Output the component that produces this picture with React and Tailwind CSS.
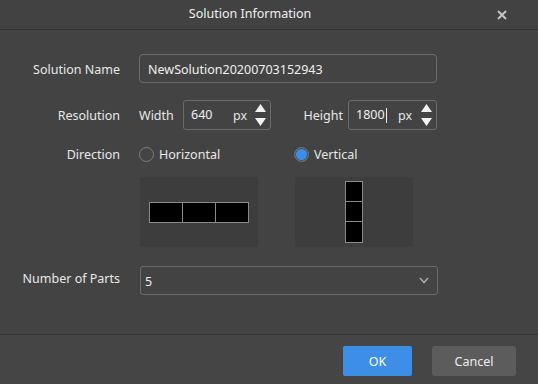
import React from "react";

const font = { fontFamily: '"Noto Sans", "Open Sans", Arial, sans-serif' };

const Spinner = () => (
  <div className="flex flex-col items-center gap-[6px] mr-[4px]">
    <svg width="11" height="8" viewBox="0 0 11 8">
      <path d="M5.5 0 L11 8 L0 8 Z" fill="#f2f2f2" />
    </svg>
    <svg width="11" height="8" viewBox="0 0 11 8">
      <path d="M0 0 L11 0 L5.5 8 Z" fill="#f2f2f2" />
    </svg>
  </div>
);

const NumberBox = ({ value, width, cursor }) => (
  <div
    className={`flex items-center h-[30px] border border-[#6b6b6b] rounded-[3px] ${width}`}
  >
    <span className="pl-[7px] w-[49px] text-[#f0f0f0] flex items-center">
      {value}
      {cursor && <span className="inline-block w-px h-[15px] bg-[#f0f0f0] ml-[1px]" />}
    </span>
    <span className="flex-1 text-[#e6e6e6] mt-[3px]">px</span>
    <Spinner />
  </div>
);

const Cell = ({ className }) => (
  <div className={`bg-black border-[#8a8a8a] ${className}`} />
);

export default function App() {
  return (
    <div
      className="w-[538px] h-[384px] bg-[#434343] text-[12.5px] text-[#e8e8e8] flex flex-col overflow-hidden"
      style={font}
    >
      {/* title bar */}
      <div className="h-[30px] flex items-center bg-[#424242] border-b border-[#343434] shrink-0">
        <div className="w-[497px] text-center text-[12.5px] text-[#f0f0f0] pl-[3px]">Solution Information</div>
        <svg width="10" height="10" viewBox="0 0 10 10">
          <path d="M1 1 L9 9 M9 1 L1 9" stroke="#c4c4c4" strokeWidth="2" />
        </svg>
      </div>

      {/* body */}
      <div className="flex-1 flex flex-col pt-[24px]">
        <div className="flex items-center">
          <div className="w-[120px] text-right mt-[3px]">Solution Name</div>
          <div className="ml-[19px] w-[298px] h-[29px] flex items-center px-[8px] pt-[3px] border border-[#6b6b6b] rounded-[4px] text-[#f0f0f0]">
            NewSolution20200703152943
          </div>
        </div>

        <div className="flex items-center mt-[17px]">
          <div className="w-[120px] text-right mt-[3px]">Resolution</div>
          <div className="ml-[19px] w-[298px] flex items-center justify-between">
            <div className="flex items-center">
              <span className="w-[44px] mt-[3px]">Width</span>
              <NumberBox value="640" width="w-[88px]" />
            </div>
            <div className="flex items-center">
              <span className="mr-[5px] mt-[3px]">Height</span>
              <NumberBox value="1800" width="w-[89px]" cursor />
            </div>
          </div>
        </div>

        <div className="flex items-center mt-[14px] h-[20px]">
          <div className="w-[120px] text-right mt-[2px]">Direction</div>
          <div className="ml-[19px] flex items-center w-[155px]">
            <span className="w-[15px] h-[15px] rounded-full border border-[#7e7e7e]" />
            <span className="ml-[5px] mt-[2px]">Horizontal</span>
          </div>
          <div className="flex items-center">
            <span className="w-[15px] h-[15px] rounded-full border border-[#6e6e6e] bg-[#3d8ee8] shadow-[inset_0_0_0_1px_#4a4a4a]" />
            <span className="ml-[5px] mt-[2px]">Vertical</span>
          </div>
        </div>

        <div className="flex mt-[13px] ml-[140px] gap-[37px]">
          <div className="w-[118px] h-[70px] bg-[#3d3d3d] rounded-[3px] flex items-center pl-[9px] pt-[1px]">
            <div className="flex border border-[#8a8a8a]">
              <Cell className="w-[33px] h-[19px] border-r" />
              <Cell className="w-[33px] h-[19px] border-r" />
              <Cell className="w-[32px] h-[19px]" />
            </div>
          </div>
          <div className="w-[118px] h-[70px] bg-[#3d3d3d] rounded-[3px] flex items-start pl-[50px] pt-[4px]">
            <div className="flex flex-col border border-[#8a8a8a]">
              <Cell className="w-[16px] h-[20px] border-b" />
              <Cell className="w-[16px] h-[20px] border-b" />
              <Cell className="w-[16px] h-[20px]" />
            </div>
          </div>
        </div>

        <div className="flex items-center mt-[19px]">
          <div className="w-[120px] text-right -mt-[2px]">Number of Parts</div>
          <div className="ml-[20px] w-[298px] h-[29px] flex items-center justify-between pl-[4px] pr-[8px] border border-[#6b6b6b] rounded-[3px] text-[#f0f0f0]">
            <span className="mt-[4px]">5</span>
            <svg width="10" height="7" viewBox="0 0 10 7">
              <path d="M1 1 L5 5.5 L9 1" stroke="#a8a8a8" strokeWidth="1.6" fill="none" />
            </svg>
          </div>
        </div>
      </div>

      {/* footer */}
      <div className="h-[50px] shrink-0 border-t border-[#363636] bg-[#454545] flex items-start justify-end pt-[11px] pr-[22px] gap-[20px]">
        <button className="w-[69px] h-[30px] bg-[#3c8ee6] text-white rounded-[2px] text-[12.5px] pt-[2px]">OK</button>
        <button className="w-[84px] h-[30px] bg-[#5c5c5c] text-[#eeeeee] rounded-[3px] text-[12.5px] pt-[2px]">Cancel</button>
      </div>
    </div>
  );
}
